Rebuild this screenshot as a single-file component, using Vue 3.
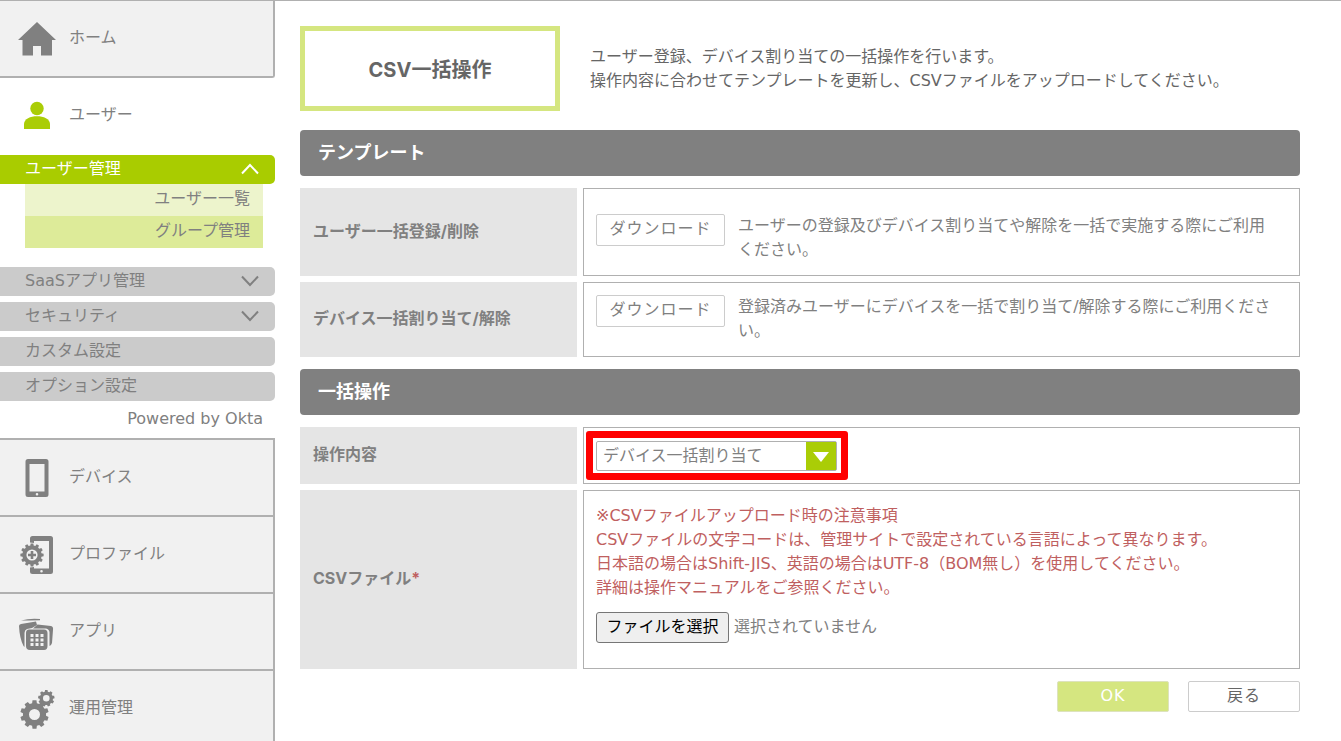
<script setup>
import { ref } from 'vue'

const operation = ref('assign')
const fileName = ref('')

const submenu = ['ユーザー一覧', 'グループ管理']
const groups = [
  { label: 'SaaSアプリ管理', expandable: true },
  { label: 'セキュリティ', expandable: true },
  { label: 'カスタム設定', expandable: false },
  { label: 'オプション設定', expandable: false },
]

function onFile(event) {
  const file = event.target.files[0]
  fileName.value = file ? file.name : ''
}

// Builds a gear outline: n teeth between radius r and radius R around (cx, cy).
function gear(cx, cy, R, r, n) {
  const points = []
  const step = (Math.PI * 2) / n
  const add = (radius, angle) => {
    points.push((cx + radius * Math.sin(angle)).toFixed(2) + ' ' + (cy - radius * Math.cos(angle)).toFixed(2))
  }
  for (let i = 0; i < n; i++) {
    const a = i * step
    add(r, a - step * 0.33)
    add(R, a - step * 0.22)
    add(R, a + step * 0.22)
    add(r, a + step * 0.33)
  }
  return 'M' + points.join('L') + 'Z'
}

function hole(cx, cy, r) {
  return `M${cx - r} ${cy}a${r} ${r} 0 1 0 ${r * 2} 0a${r} ${r} 0 1 0 ${-r * 2} 0Z`
}

const profileGear = gear(15, 20, 11.7, 9.6, 12) + hole(15, 20, 5.6)
const bigGear = gear(17.5, 25.5, 14.3, 11.6, 10) + hole(17.5, 25.5, 5.5)
const smallGear = gear(29.3, 9.3, 8.3, 6.7, 9) + hole(29.3, 9.3, 3.3)
</script>

<template>
  <div class="page">
    <nav class="sidebar">
      <a href="#" class="item home">
        <svg class="icon" viewBox="0 0 40 40" aria-hidden="true">
          <path d="M20 3 39 21H35V36.500H24V27H16V36.500H5.500V21H1Z" />
        </svg>
        <span>ホーム</span>
      </a>
      <a href="#" class="item user">
        <svg class="icon green" viewBox="0 0 40 40" aria-hidden="true">
          <circle cx="20" cy="12.500" r="6.700" />
          <path d="M7 33V28C7 17.500 33 17.500 33 28V33Z" />
        </svg>
        <span>ユーザー</span>
      </a>

      <button type="button" class="group active" aria-expanded="true">
        <span>ユーザー管理</span>
        <svg class="chevron" viewBox="0 0 18 12" aria-hidden="true"><path d="M1 10.500 9 2 17 10.500" /></svg>
      </button>
      <ul class="submenu">
        <li v-for="name in submenu" :key="name"><a href="#">{{ name }}</a></li>
      </ul>
      <button v-for="g in groups" :key="g.label" type="button" class="group">
        <span>{{ g.label }}</span>
        <svg v-if="g.expandable" class="chevron" viewBox="0 0 18 12" aria-hidden="true"><path d="M1 1.500 9 10 17 1.500" /></svg>
      </button>
      <p class="powered">Powered by Okta</p>

      <div class="lower">
        <a href="#" class="item">
          <svg class="icon" viewBox="0 0 40 40" aria-hidden="true">
            <path fill-rule="evenodd" d="M11 1H29Q31.500 1 31.500 3.500V36.500Q31.500 39 29 39H11Q8.500 39 8.500 36.500V3.500Q8.500 1 11 1ZM12.500 6V33.500H27.500V6ZM20 35A1.300 1.300 0 1 0 20 37.600A1.300 1.300 0 1 0 20 35Z" />
          </svg>
          <span>デバイス</span>
        </a>
        <a href="#" class="item">
          <svg class="icon" viewBox="0 0 40 40" aria-hidden="true">
            <path fill-rule="evenodd" d="M13 7.500V3.500Q13 1 15.500 1H33.500Q36 1 36 3.500V36.500Q36 39 33.500 39H15.500Q13 39 13 36.500V32.500L17 32V33.500H32V6H17V8ZM24.500 35A1.300 1.300 0 1 0 24.500 37.600A1.300 1.300 0 1 0 24.500 35Z" />
            <path fill-rule="evenodd" :d="profileGear" />
            <path d="M13.700 16H16.300V18.700H19V21.300H16.300V24H13.700V21.300H11V18.700H13.700Z" />
          </svg>
          <span>プロファイル</span>
        </a>
        <a href="#" class="item">
          <svg class="icon" viewBox="0 0 40 40" aria-hidden="true">
            <path d="M4 8.500Q13 6 23 7V8.300Q13 8.500 4 8.500Z" />
            <path d="M4 12 19 9.500 20 13 15 16 10 17Q7.500 18 7.500 21V35L6.500 34Q2.500 26 2 14Q2 12.500 4 12Z" />
            <path d="M20.500 12.500 34 14Q36.500 14.500 36 18L35 31Q34 34 32.500 34V20Q32 17 29 16.500H16Z" />
            <path fill-rule="evenodd" d="M12 17.500H27Q30.500 17.500 30.500 21V34Q30.500 38 27 38H13Q9 38 9 34V21Q9 17.500 12 17.500ZM13.500 22V25H16.500V22ZM18.500 22V25H21.500V22ZM23.500 22V25H26.500V22ZM13.500 26.500V29.500H16.500V26.500ZM18.500 26.500V29.500H21.500V26.500ZM23.500 26.500V29.500H26.500V26.500ZM13.500 31V34H16.500V31ZM18.500 31V34H21.500V31ZM23.500 31V34H26.500V31Z" />
          </svg>
          <span>アプリ</span>
        </a>
        <a href="#" class="item">
          <svg class="icon" viewBox="0 0 40 40" aria-hidden="true">
            <path fill-rule="evenodd" :d="bigGear" />
            <path fill-rule="evenodd" :d="smallGear" />
          </svg>
          <span>運用管理</span>
        </a>
      </div>
    </nav>

    <main class="main">
      <header class="intro">
        <h1>CSV一括操作</h1>
        <p>ユーザー登録、デバイス割り当ての一括操作を行います。<br />操作内容に合わせてテンプレートを更新し、CSVファイルをアップロードしてください。</p>
      </header>

      <h2>テンプレート</h2>
      <table>
        <tbody>
          <tr>
            <th scope="row">ユーザー一括登録/削除</th>
            <td>
              <div class="template first">
                <button type="button" class="download">ダウンロード</button>
                <p>ユーザーの登録及びデバイス割り当てや解除を一括で実施する際にご利用ください。</p>
              </div>
            </td>
          </tr>
          <tr>
            <th scope="row">デバイス一括割り当て/解除</th>
            <td>
              <div class="template">
                <button type="button" class="download">ダウンロード</button>
                <p>登録済みユーザーにデバイスを一括で割り当て/解除する際にご利用ください。</p>
              </div>
            </td>
          </tr>
        </tbody>
      </table>

      <h2>一括操作</h2>
      <table>
        <tbody>
          <tr>
            <th scope="row"><label for="operation">操作内容</label></th>
            <td class="select-cell">
              <div class="select">
                <select id="operation" v-model="operation">
                  <option value="assign">デバイス一括割り当て</option>
                </select>
                <svg class="arrow" viewBox="0 0 30 28" aria-hidden="true"><path d="M7 10H23L15 20Z" /></svg>
              </div>
            </td>
          </tr>
          <tr>
            <th scope="row">CSVファイル<span class="required">*</span></th>
            <td class="file-cell">
              <p class="notice">※CSVファイルアップロード時の注意事項<br />CSVファイルの文字コードは、管理サイトで設定されている言語によって異なります。<br />日本語の場合はShift-JIS、英語の場合はUTF-8（BOM無し）を使用してください。<br />詳細は操作マニュアルをご参照ください。</p>
              <div class="file">
                <input id="csv" type="file" accept=".csv" @change="onFile" />
                <label for="csv">ファイルを選択</label>
                <span>{{ fileName || '選択されていません' }}</span>
              </div>
            </td>
          </tr>
        </tbody>
      </table>

      <div class="actions">
        <button type="button" class="ok">OK</button>
        <button type="button" class="back">戻る</button>
      </div>
    </main>
  </div>
</template>

<style>
body {
  margin: 0;
  background: #fff;
}
</style>

<style scoped>
.page {
  display: flex;
  box-sizing: border-box;
  height: 100vh;
  overflow: hidden;
  border-top: 1px solid #b0b0b0;
  color: #808080;
  font: 16px/24px "DejaVu Sans", "Noto Sans CJK JP", sans-serif;
}

.page *,
.page *::after {
  box-sizing: border-box;
}

p,
h1,
h2,
ul {
  margin: 0;
  padding: 0;
}

a {
  color: inherit;
  text-decoration: none;
}

button,
select {
  color: inherit;
  font: inherit;
}

/* Sidebar */
.sidebar {
  flex: 0 0 275px;
}

.item {
  display: flex;
  align-items: center;
  gap: 12px;
  height: 77px;
  padding-left: 17px;
  border-right: 2px solid #b0b0b0;
  border-bottom: 2px solid #b0b0b0;
  background: #f1f1f1;
}

.item span {
  padding-bottom: 2px;
}

.home {
  border-bottom-right-radius: 3px;
}

.user {
  border-color: transparent;
  background: none;
}

.icon {
  width: 40px;
  height: 40px;
  fill: #808080;
}

.green {
  fill: #aacd06;
}

.lower {
  border-top: 2px solid #b0b0b0;
}

.group {
  display: flex;
  align-items: center;
  justify-content: space-between;
  width: 100%;
  height: 29px;
  margin: 0 0 6px;
  padding: 0 16px 2px 25px;
  border: 0;
  border-radius: 0 5px 5px 0;
  background: #cbcbcb;
}

.group.active {
  margin: 0;
  background: #a9cc00;
  color: #fff;
}

.chevron {
  width: 18px;
  height: 12px;
  fill: none;
  stroke: currentColor;
  stroke-width: 2;
}

.submenu {
  margin: 0 12px 19px 25px;
  list-style: none;
}

.submenu li {
  height: 32px;
  padding: 3px 13px 0 0;
  background: #edf4cc;
  text-align: right;
}

.submenu li + li {
  background: #ddeb99;
}

.powered {
  height: 31px;
  margin-right: 12px;
  text-align: right;
}

/* Main column */
.main {
  flex: 1;
  margin: 25px 41px 0 25px;
}

.intro {
  display: flex;
  gap: 30px;
  margin-bottom: 19px;
  color: #666;
}

.intro p {
  padding-top: 19px;
}

h1 {
  flex: 0 0 260px;
  height: 85px;
  border: 5px solid #d5e680;
  font: bold 20px/78px Inter, "Noto Sans CJK JP", sans-serif;
  text-align: center;
}

h2 {
  height: 46px;
  padding-left: 18px;
  border-radius: 4px;
  background: #808080;
  color: #fff;
  font-size: 18px;
  line-height: 46px;
}

table {
  width: calc(100% + 12px);
  margin: 6px -6px;
  border-collapse: separate;
  border-spacing: 6px;
}

th {
  width: 277px;
  padding: 0 13px 3px;
  background: #e5e5e5;
  font-family: Inter, "Noto Sans CJK JP", sans-serif;
  text-align: left;
}

td {
  padding: 12px 12px 13px;
  border: 1px solid #b0b0b0;
}

.template {
  display: flex;
  align-items: flex-start;
  gap: 13px;
  padding-right: 10px;
}

.first {
  padding-top: 13px;
}

.download {
  flex: 0 0 129px;
  height: 32px;
  padding: 0 0 3px;
  border: 1px solid #ccc;
  border-radius: 2px;
  background: #fff;
  letter-spacing: 1px;
}

.select-cell {
  padding: 13px 12px 12px;
}

.select {
  position: relative;
  width: 241px;
  height: 30px;
}

.select::after {
  content: "";
  position: absolute;
  inset: -10px -11px -9px -10px;
  border: 7px solid #f00;
  border-radius: 3px;
  pointer-events: none;
}

select {
  display: block;
  width: 100%;
  height: 30px;
  padding: 0 36px 0 6px;
  border: 1px solid #b0b0b0;
  border-radius: 2px;
  background: #fff;
  appearance: none;
}

.arrow {
  position: absolute;
  top: 1px;
  right: 1px;
  width: 30px;
  height: 28px;
  background: #aacd06;
  fill: #fff;
  pointer-events: none;
}

.required,
.notice {
  color: #bf6060;
}

.file-cell {
  padding: 13px 12px 25px;
}

.file {
  position: relative;
  display: flex;
  align-items: center;
  gap: 5px;
  margin-top: 12px;
}

.file input {
  position: absolute;
  width: 133px;
  height: 31px;
  opacity: 0;
}

.file label {
  width: 133px;
  height: 31px;
  border: 1px solid #767676;
  border-radius: 3px;
  background: #efefef;
  color: #000;
  line-height: 27px;
  text-align: center;
}

.file span {
  padding-bottom: 2px;
}

.actions {
  display: flex;
  justify-content: flex-end;
  gap: 19px;
}

.actions button {
  width: 112px;
  height: 31px;
  padding: 0 0 2px;
  border: 1px solid #ccc;
  border-radius: 2px;
  background: #fff;
  color: #666;
  letter-spacing: 1px;
}

.actions .ok {
  border-color: #dde3bd;
  background: #d5e680;
  color: #fff;
}
</style>
